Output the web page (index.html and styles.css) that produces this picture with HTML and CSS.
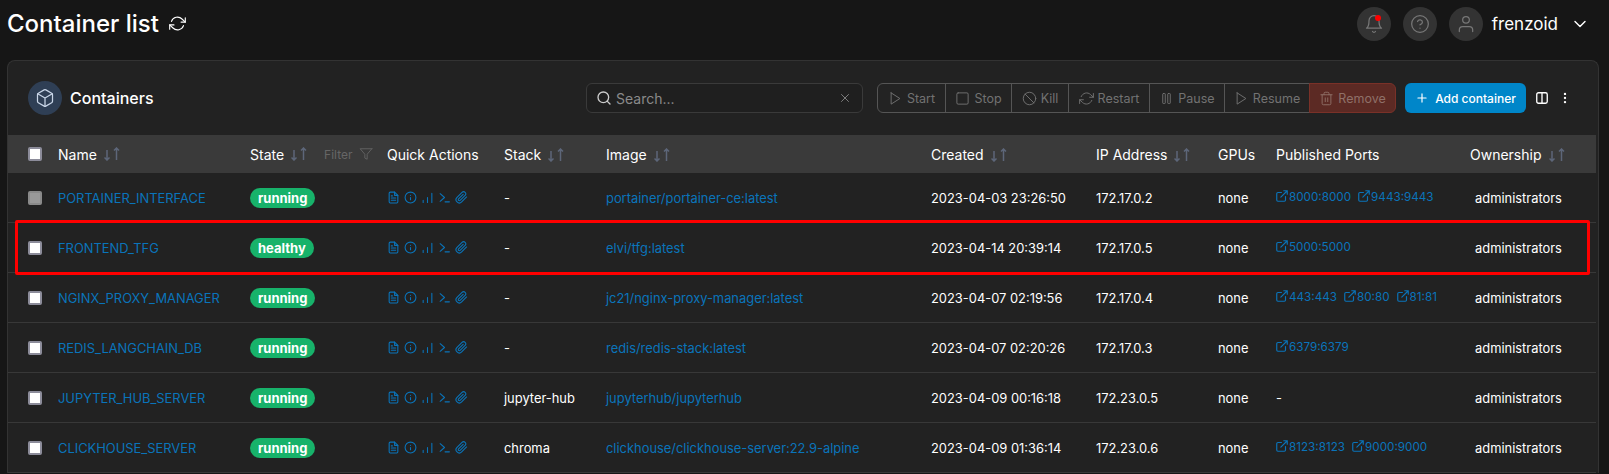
FILE: index.html
```html
<!DOCTYPE html>
<html lang="en">
<head>
  <meta charset="UTF-8">
  <title>Container list</title>
  <link rel="stylesheet" href="styles.css">
</head>
<body>
  <svg class="defs" xmlns="http://www.w3.org/2000/svg">
    <symbol id="i-refresh" viewBox="0 0 24 24"><path d="M23 4v6h-6M1 20v-6h6"/><path d="M3.51 9a9 9 0 0 1 14.85-3.36L23 10M1 14l4.64 4.36A9 9 0 0 0 20.49 15"/></symbol>
    <symbol id="i-box" viewBox="0 0 24 24"><path d="M21 16V8a2 2 0 0 0-1-1.73l-7-4a2 2 0 0 0-2 0l-7 4A2 2 0 0 0 3 8v8a2 2 0 0 0 1 1.73l7 4a2 2 0 0 0 2 0l7-4A2 2 0 0 0 21 16z"/><path d="M3.27 6.96 12 12.01l8.73-5.05M12 22.08V12"/></symbol>
    <symbol id="i-bell" viewBox="0 0 24 24"><path d="M18 8A6 6 0 0 0 6 8c0 7-3 9-3 9h18s-3-2-3-9"/><path d="M13.73 21a2 2 0 0 1-3.46 0"/></symbol>
    <symbol id="i-help" viewBox="0 0 24 24"><circle cx="12" cy="12" r="10"/><path d="M9.09 9a3 3 0 0 1 5.83 1c0 2-3 3-3 3M12 17h.01"/></symbol>
    <symbol id="i-user" viewBox="0 0 24 24"><path d="M20 21v-2a4 4 0 0 0-4-4H8a4 4 0 0 0-4 4v2"/><circle cx="12" cy="7" r="4"/></symbol>
    <symbol id="i-chevron" viewBox="0 0 24 24"><path d="m6 9 6 6 6-6"/></symbol>
    <symbol id="i-search" viewBox="0 0 24 24"><circle cx="11" cy="11" r="8"/><path d="m21 21-4.35-4.35"/></symbol>
    <symbol id="i-x" viewBox="0 0 24 24"><path d="M18 6 6 18M6 6l12 12"/></symbol>
    <symbol id="i-play" viewBox="0 0 24 24"><path d="m5 3 14 9-14 9V3z"/></symbol>
    <symbol id="i-square" viewBox="0 0 24 24"><rect x="3" y="3" width="18" height="18" rx="2"/></symbol>
    <symbol id="i-slash" viewBox="0 0 24 24"><circle cx="12" cy="12" r="10"/><path d="m4.93 4.93 14.14 14.14"/></symbol>
    <symbol id="i-pause" viewBox="0 0 24 24"><rect x="6" y="4" width="4" height="16" rx="1"/><rect x="14" y="4" width="4" height="16" rx="1"/></symbol>
    <symbol id="i-trash" viewBox="0 0 24 24"><path d="M3 6h18M19 6v14a2 2 0 0 1-2 2H7a2 2 0 0 1-2-2V6m3 0V4a2 2 0 0 1 2-2h4a2 2 0 0 1 2 2v2M10 11v6M14 11v6"/></symbol>
    <symbol id="i-plus" viewBox="0 0 24 24"><path d="M12 5v14M5 12h14"/></symbol>
    <symbol id="i-columns" viewBox="0 0 24 24"><rect x="3" y="3" width="18" height="18" rx="3"/><path d="M12 3v18"/></symbol>
    <symbol id="i-dots" viewBox="0 0 24 24"><circle cx="12" cy="5" r="2"/><circle cx="12" cy="12" r="2"/><circle cx="12" cy="19" r="2"/></symbol>
    <symbol id="i-sort" viewBox="0 0 16 14"><path d="M3 3v10M.5 10.500 3 13l2.500-2.500M12.500 13V1M10 3.500 12.500 1 15 3.500"/></symbol>
    <symbol id="i-filter" viewBox="0 0 24 24"><path d="M22 3H2l8 9.460V19l4 2v-8.540L22 3z"/></symbol>
    <symbol id="i-doc" viewBox="0 0 24 24"><path d="M14 2H6a2 2 0 0 0-2 2v16a2 2 0 0 0 2 2h12a2 2 0 0 0 2-2V8z"/><path d="M14 2v6h6M16 13H8M16 17H8M10 9H8"/></symbol>
    <symbol id="i-info" viewBox="0 0 24 24"><circle cx="12" cy="12" r="10"/><path d="M12 16v-4M12 8h.01"/></symbol>
    <symbol id="i-bars" viewBox="0 0 24 24"><path d="M20 21V4M12 21v-9M4 21v-4"/></symbol>
    <symbol id="i-term" viewBox="0 0 24 24"><path d="m4 5 8 7-8 7M13 20h8"/></symbol>
    <symbol id="i-clip" viewBox="0 0 24 24"><path d="m21.440 11.050-9.190 9.190a6 6 0 0 1-8.490-8.490l9.190-9.190a4 4 0 0 1 5.660 5.660l-9.200 9.190a2 2 0 0 1-2.830-2.830l8.490-8.480"/></symbol>
    <symbol id="i-ext" viewBox="0 0 24 24"><path d="M18 13v6a2 2 0 0 1-2 2H5a2 2 0 0 1-2-2V8a2 2 0 0 1 2-2h6M15 3h6v6M10 14 21 3"/></symbol>
  </svg>

  <header class="topbar">
    <div class="page-title">
      <h1>Container list</h1>
      <svg class="icon refresh"><use href="#i-refresh"/></svg>
    </div>
    <div class="user-area">
      <span class="round-btn bell"><svg class="icon"><use href="#i-bell"/></svg><span class="dot"></span></span>
      <span class="round-btn"><svg class="icon"><use href="#i-help"/></svg></span>
      <span class="round-btn"><svg class="icon"><use href="#i-user"/></svg></span>
      <span class="username">frenzoid</span>
      <svg class="icon chevron"><use href="#i-chevron"/></svg>
    </div>
  </header>

  <section class="card">
    <div class="card-head">
      <span class="card-icon"><svg class="icon"><use href="#i-box"/></svg></span>
      <h2>Containers</h2>
      <div class="search">
        <svg class="icon"><use href="#i-search"/></svg>
        <span class="search-text">Search...</span>
        <svg class="icon clear"><use href="#i-x"/></svg>
      </div>
      <div class="btn-group">
        <span class="btn w-start"><svg class="icon"><use href="#i-play"/></svg>Start</span>
        <span class="btn w-stop"><svg class="icon"><use href="#i-square"/></svg>Stop</span>
        <span class="btn w-kill"><svg class="icon"><use href="#i-slash"/></svg>Kill</span>
        <span class="btn w-restart"><svg class="icon"><use href="#i-refresh"/></svg>Restart</span>
        <span class="btn w-pause"><svg class="icon"><use href="#i-pause"/></svg>Pause</span>
        <span class="btn w-resume"><svg class="icon"><use href="#i-play"/></svg>Resume</span>
        <span class="btn btn-danger"><svg class="icon"><use href="#i-trash"/></svg>Remove</span>
      </div>
      <span class="btn-add"><svg class="icon"><use href="#i-plus"/></svg>Add container</span>
      <svg class="icon tool"><use href="#i-columns"/></svg>
      <svg class="icon tool dots"><use href="#i-dots"/></svg>
    </div>

    <table class="containers">
      <colgroup>
        <col class="c-name"><col class="c-state"><col class="c-actions"><col class="c-stack"><col class="c-image">
        <col class="c-created"><col class="c-ip"><col class="c-gpus"><col class="c-ports"><col class="c-owner">
      </colgroup>
      <thead>
        <tr>
          <th><div class="name-cell"><input type="checkbox" class="check"><span>Name</span><svg class="sort"><use href="#i-sort"/></svg></div></th>
          <th><div class="state-head"><span>State</span><svg class="sort"><use href="#i-sort"/></svg><span class="filter">Filter<svg class="icon"><use href="#i-filter"/></svg></span></div></th>
          <th>Quick Actions</th>
          <th>Stack<svg class="sort"><use href="#i-sort"/></svg></th>
          <th>Image<svg class="sort"><use href="#i-sort"/></svg></th>
          <th>Created<svg class="sort"><use href="#i-sort"/></svg></th>
          <th>IP Address<svg class="sort"><use href="#i-sort"/></svg></th>
          <th>GPUs</th>
          <th>Published Ports</th>
          <th>Ownership<svg class="sort"><use href="#i-sort"/></svg></th>
        </tr>
      </thead>
      <tbody>
        <tr>
          <td><div class="name-cell"><input type="checkbox" class="check" disabled><a>PORTAINER_INTERFACE</a></div></td>
          <td><span class="badge">running</span></td>
          <td><div class="quick"><svg><use href="#i-doc"/></svg><svg><use href="#i-info"/></svg><svg><use href="#i-bars"/></svg><svg><use href="#i-term"/></svg><svg><use href="#i-clip"/></svg></div></td>
          <td>-</td>
          <td><a>portainer/portainer-ce:latest</a></td>
          <td>2023-04-03 23:26:50</td>
          <td>172.17.0.2</td>
          <td>none</td>
          <td><div class="ports"><a><svg><use href="#i-ext"/></svg>8000:8000</a><a><svg><use href="#i-ext"/></svg>9443:9443</a></div></td>
          <td class="owner">administrators</td>
        </tr>
        <tr>
          <td><div class="name-cell"><input type="checkbox" class="check"><a>FRONTEND_TFG</a></div></td>
          <td><span class="badge">healthy</span></td>
          <td><div class="quick"><svg><use href="#i-doc"/></svg><svg><use href="#i-info"/></svg><svg><use href="#i-bars"/></svg><svg><use href="#i-term"/></svg><svg><use href="#i-clip"/></svg></div></td>
          <td>-</td>
          <td><a>elvi/tfg:latest</a></td>
          <td>2023-04-14 20:39:14</td>
          <td>172.17.0.5</td>
          <td>none</td>
          <td><div class="ports"><a><svg><use href="#i-ext"/></svg>5000:5000</a></div></td>
          <td class="owner">administrators</td>
        </tr>
        <tr>
          <td><div class="name-cell"><input type="checkbox" class="check"><a>NGINX_PROXY_MANAGER</a></div></td>
          <td><span class="badge">running</span></td>
          <td><div class="quick"><svg><use href="#i-doc"/></svg><svg><use href="#i-info"/></svg><svg><use href="#i-bars"/></svg><svg><use href="#i-term"/></svg><svg><use href="#i-clip"/></svg></div></td>
          <td>-</td>
          <td><a>jc21/nginx-proxy-manager:latest</a></td>
          <td>2023-04-07 02:19:56</td>
          <td>172.17.0.4</td>
          <td>none</td>
          <td><div class="ports"><a><svg><use href="#i-ext"/></svg>443:443</a><a><svg><use href="#i-ext"/></svg>80:80</a><a><svg><use href="#i-ext"/></svg>81:81</a></div></td>
          <td class="owner">administrators</td>
        </tr>
        <tr>
          <td><div class="name-cell"><input type="checkbox" class="check"><a>REDIS_LANGCHAIN_DB</a></div></td>
          <td><span class="badge">running</span></td>
          <td><div class="quick"><svg><use href="#i-doc"/></svg><svg><use href="#i-info"/></svg><svg><use href="#i-bars"/></svg><svg><use href="#i-term"/></svg><svg><use href="#i-clip"/></svg></div></td>
          <td>-</td>
          <td><a>redis/redis-stack:latest</a></td>
          <td>2023-04-07 02:20:26</td>
          <td>172.17.0.3</td>
          <td>none</td>
          <td><div class="ports"><a><svg><use href="#i-ext"/></svg>6379:6379</a></div></td>
          <td class="owner">administrators</td>
        </tr>
        <tr>
          <td><div class="name-cell"><input type="checkbox" class="check"><a>JUPYTER_HUB_SERVER</a></div></td>
          <td><span class="badge">running</span></td>
          <td><div class="quick"><svg><use href="#i-doc"/></svg><svg><use href="#i-info"/></svg><svg><use href="#i-bars"/></svg><svg><use href="#i-term"/></svg><svg><use href="#i-clip"/></svg></div></td>
          <td>jupyter-hub</td>
          <td><a>jupyterhub/jupyterhub</a></td>
          <td>2023-04-09 00:16:18</td>
          <td>172.23.0.5</td>
          <td>none</td>
          <td>-</td>
          <td class="owner">administrators</td>
        </tr>
        <tr>
          <td><div class="name-cell"><input type="checkbox" class="check"><a>CLICKHOUSE_SERVER</a></div></td>
          <td><span class="badge">running</span></td>
          <td><div class="quick"><svg><use href="#i-doc"/></svg><svg><use href="#i-info"/></svg><svg><use href="#i-bars"/></svg><svg><use href="#i-term"/></svg><svg><use href="#i-clip"/></svg></div></td>
          <td>chroma</td>
          <td><a>clickhouse/clickhouse-server:22.9-alpine</a></td>
          <td>2023-04-09 01:36:14</td>
          <td>172.23.0.6</td>
          <td>none</td>
          <td><div class="ports"><a><svg><use href="#i-ext"/></svg>8123:8123</a><a><svg><use href="#i-ext"/></svg>9000:9000</a></div></td>
          <td class="owner">administrators</td>
        </tr>
      </tbody>
    </table>
  </section>

  <div class="marker"></div>
</body>
</html>
```

FILE: styles.css
```css
html, body { margin: 0; padding: 0; height: 474px; overflow: hidden; }
body { position: relative; background-color: #161616; color: #fff; font-family: Inter, "Liberation Sans", sans-serif; font-size: 13px; }
h1, h2 { margin: 0; font-weight: 500; }
a { color: #0a74ba; }
.defs { display: none; }
.icon { width: 14px; height: 14px; fill: none; stroke: currentColor; stroke-width: 2; stroke-linecap: round; stroke-linejoin: round; flex: none; }

.topbar { display: flex; align-items: center; justify-content: space-between; height: 47px; padding: 0 19px 13px 7px; }
.page-title { display: flex; align-items: center; gap: 10px; }
.page-title h1 { font-size: 24px; line-height: 30px; color: #fff; }
.refresh { width: 17px; height: 17px; stroke-width: 1.6; }
.user-area { display: flex; align-items: center; gap: 12px; }
.round-btn { position: relative; display: flex; align-items: center; justify-content: center; width: 34px; height: 34px; border-radius: 50%; background-color: #333; color: #777; }
.round-btn .icon { width: 20px; height: 20px; stroke-width: 1.5; }
.dot { position: absolute; top: 8px; left: 18px; width: 6px; height: 6px; border-radius: 50%; background-color: #f00; }
.username { margin-left: -3px; font-size: 17px; color: #fff; }
.chevron { width: 20px; height: 20px; stroke-width: 1.7; }

.card { width: 1590px; margin-left: 7px; background-color: #222; border: 1px solid #333; border-bottom: 0; border-radius: 8px 8px 0 0; }
.card-head { display: flex; align-items: center; height: 74px; padding: 0 26px 0 20px; }
.card-icon { display: flex; align-items: center; justify-content: center; width: 34px; height: 34px; border-radius: 50%; background-color: #2f3f55; color: #c9d6e8; }
.card-icon .icon { width: 20px; height: 20px; stroke-width: 1.5; }
.card-head h2 { margin-left: 8px; font-size: 16px; color: #fff; }

.search { display: flex; align-items: center; gap: 4px; width: 277px; height: 30px; box-sizing: border-box; margin-left: auto; padding: 0 10px 0 9px; background-color: #1f1f1f; border: 1px solid #3a3a3a; border-radius: 6px; color: #ccc; }
.search .icon { width: 16px; height: 16px; }
.search-text { flex: 1; font-size: 14px; color: #8a8a8a; }
.search .clear { width: 14px; height: 14px; color: #8a8a8a; stroke-width: 1.5; }

.btn-group { display: flex; height: 30px; margin-left: 14px; }
.btn { display: flex; align-items: center; justify-content: center; gap: 4px; box-sizing: border-box; background-color: #232323; border: 1px solid #555; margin-left: -1px; color: #727272; font-size: 12.5px; }
.btn .icon { width: 15px; height: 15px; stroke-width: 1.5; }
.w-start { width: 69px; margin-left: 0; border-radius: 6px 0 0 6px; }
.w-stop { width: 67px; }
.w-kill { width: 58px; }
.w-restart { width: 82px; }
.w-pause { width: 76px; }
.w-resume { width: 86px; }
.btn-danger { width: 87px; background-color: #5c2a24; border-color: #7a3128; color: #8f7068; border-radius: 0 6px 6px 0; }
.btn-add { display: flex; align-items: center; justify-content: center; gap: 6px; width: 121px; height: 30px; margin-left: 9px; background-color: #0086c9; border-radius: 6px; color: #fff; font-size: 12px; font-weight: 500; }
.tool { margin-left: 9px; color: #fff; stroke-width: 2.3; }
.dots { margin-left: 9px; fill: #fff; stroke: none; }

.containers { width: 1588px; table-layout: fixed; border-collapse: separate; border-spacing: 0; }
.c-name { width: 242px; }
.c-state { width: 137px; }
.c-actions { width: 117px; }
.c-stack { width: 102px; }
.c-image { width: 325px; }
.c-created { width: 165px; }
.c-ip { width: 122px; }
.c-gpus { width: 58px; }
.c-ports { width: 194px; }
.c-owner { width: 126px; }
.containers th { height: 38px; padding: 0; background-color: #3a3a3a; text-align: left; font-size: 14px; font-weight: 400; color: #fff; }
.containers td { height: 50px; box-sizing: border-box; padding: 1px 0 0; border-bottom: 1px solid #383838; font-size: 12.9px; color: #fff; }
.name-cell { display: flex; align-items: center; padding-left: 20px; }
.name-cell span, .name-cell a { margin-left: 16px; }
.check { appearance: none; box-sizing: border-box; width: 14px; height: 14px; margin: 0; background-color: #fff; border: 2px solid #8c8c9a; border-radius: 2px; }
.check:disabled { background-color: #999; border-color: #8a8a8a; }
.sort { width: 16px; height: 14px; margin-left: 7px; vertical-align: -2px; fill: none; stroke: #5d6679; stroke-width: 1.5; }
.state-head { display: flex; align-items: center; }
.filter { display: flex; align-items: center; gap: 6px; margin-left: 17px; font-size: 12px; color: #666; }
.filter .icon { stroke-width: 1.5; }
.badge { display: inline-block; padding: 0 8px; line-height: 20px; background-color: #17b26a; border-radius: 10px; font-size: 13px; font-weight: 700; color: #fff; }
.quick { display: flex; align-items: center; gap: 4px; padding-bottom: 2px; }
.quick svg { width: 13px; height: 13px; fill: none; stroke: #0a74ba; stroke-width: 2; stroke-linecap: round; stroke-linejoin: round; }
.ports { display: flex; gap: 7px; padding-bottom: 2px; font-size: 11.7px; }
.ports a { display: flex; align-items: center; }
.ports svg { width: 14px; height: 14px; margin: -3px 0 0 -1px; fill: none; stroke: #0a74ba; stroke-width: 2; stroke-linecap: round; stroke-linejoin: round; }
.containers td.owner { padding-left: 5px; }

.marker { position: absolute; left: 15px; top: 220px; width: 1569px; height: 49px; border: 3px solid #f00; border-radius: 2px; }
```
